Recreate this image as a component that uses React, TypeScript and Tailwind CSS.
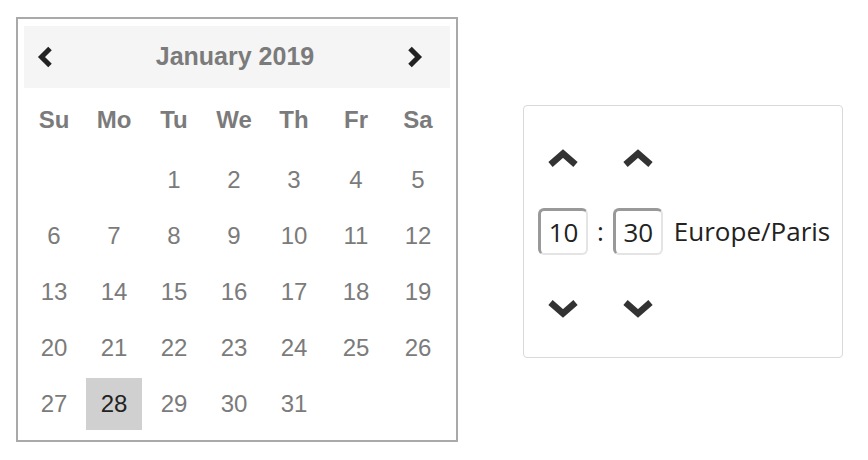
import React from "react";

const days: (number | null)[] = [
  null, null, 1, 2, 3, 4, 5,
  6, 7, 8, 9, 10, 11, 12,
  13, 14, 15, 16, 17, 18, 19,
  20, 21, 22, 23, 24, 25, 26,
  27, 28, 29, 30, 31, null, null,
];

const weekdays = ["Su", "Mo", "Tu", "We", "Th", "Fr", "Sa"];

function ChevLeft() {
  return (
    <svg width="16" height="24" viewBox="0 0 16 24">
      <polyline points="13,3.5 4.5,12 13,20.5" fill="none" stroke="#222" strokeWidth="5" strokeLinejoin="miter" />
    </svg>
  );
}
function ChevRight() {
  return (
    <svg width="16" height="24" viewBox="0 0 16 24">
      <polyline points="3,3.5 11.5,12 3,20.5" fill="none" stroke="#222" strokeWidth="5" strokeLinejoin="miter" />
    </svg>
  );
}
function ChevUp() {
  return (
    <svg width="32" height="19" viewBox="0 0 32 19">
      <polyline points="3.5,15.5 16,4.5 28.5,15.5" fill="none" stroke="#333" strokeWidth="6.5" strokeLinejoin="miter" />
    </svg>
  );
}
function ChevDown() {
  return (
    <svg width="32" height="20" viewBox="0 0 32 20">
      <polyline points="3.5,4.5 16,15.5 28.5,4.5" fill="none" stroke="#333" strokeWidth="6.5" strokeLinejoin="miter" />
    </svg>
  );
}

function TimeCol({ value }: { value: string }) {
  return (
    <div className="flex flex-col items-center">
      <ChevUp />
      <div className="mt-[40px] w-[50px] h-[47px] rounded-[6px] border-t-[3px] border-l-[3px] border-b-[2px] border-r-[2px] border-t-[#999999] border-l-[#999999] border-b-[#e4e4e4] border-r-[#e4e4e4] flex items-center justify-center text-[26px] text-[#222]">
        {value}
      </div>
      <div className="mt-[43px]">
        <ChevDown />
      </div>
    </div>
  );
}

export default function App() {
  return (
    <div className="flex items-start pt-[17px] pl-[16px] bg-white w-[868px] h-[460px]">
      <div
        className="w-[442px] h-[425px] border-2 border-[#a9a9a9] pt-[7px] px-[6px]"
        style={{ fontFamily: '"Liberation Sans", Arial, Helvetica, sans-serif' }}
      >
        <div className="h-[62px] bg-[#f5f5f5] flex items-center pl-[13px] pr-[27px]">
          <ChevLeft />
          <div className="flex-1 text-center pl-[10px] text-[25px] font-bold text-[#7b7b7b]">January 2019</div>
          <ChevRight />
        </div>
        <div className="ml-[2px] mt-[2px] grid grid-cols-[56px_56px_56px_56px_56px_60px_56px] gap-x-[4px]">
          {weekdays.map((w) => (
            <div key={w} className="h-[60px] flex items-center justify-center text-[24px] font-bold text-[#7b7b7b]">
              {w}
            </div>
          ))}
        </div>
        <div className="ml-[2px] mt-[4px] grid grid-cols-[56px_56px_56px_56px_56px_60px_56px] gap-x-[4px] gap-y-[4px] auto-rows-[52px]">
          {days.map((d, i) => (
            <div
              key={i}
              className={
                d === 28
                  ? "flex items-center justify-center text-[24px] bg-[#d0d0d0] text-[#222]"
                  : "flex items-center justify-center text-[24px] text-[#7b7b7b]"
              }
            >
              {d ?? ""}
            </div>
          ))}
        </div>
      </div>
      <div
        className="ml-[65px] mt-[88px] w-[320px] h-[253px] border border-[#d9d9d9] rounded-[4px] pt-[43px] px-[14px] flex items-start"
        style={{ fontFamily: '"Open Sans", sans-serif' }}
      >
        <div className="flex items-center">
          <TimeCol value="10" />
          <div className="mx-[9px] text-[26px] text-[#222] mb-[4px]">:</div>
          <TimeCol value="30" />
          <div className="ml-[11px] text-[26px] text-[#222] mb-[4px]">Europe/Paris</div>
        </div>
      </div>
    </div>
  );
}
